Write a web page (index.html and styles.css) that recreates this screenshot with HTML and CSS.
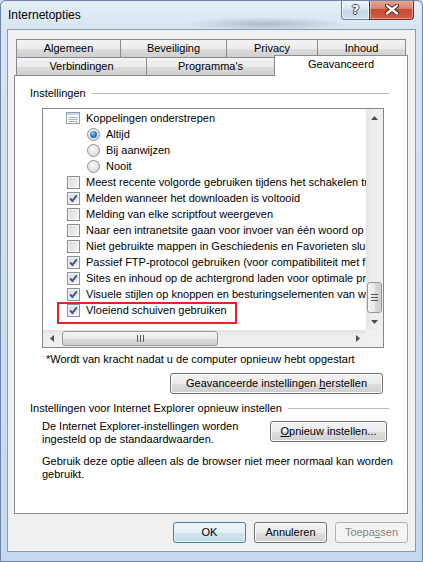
FILE: index.html
```html
<!DOCTYPE html>
<html lang="nl">
<head>
    <meta charset="UTF-8">
    <title>Internetopties</title>
    <link rel="stylesheet" href="styles.css">
</head>
<body>

<div class="window">
    <div class="titlebar">
        <span class="title">Internetopties</span>
        <div class="caption-buttons">
            <div class="cap-btn help"><span>?</span></div>
            <div class="cap-btn close">
                <svg width="14" height="11" viewBox="0 0 14 11">
                    <path d="M2 1.5 L12 9.5 M12 1.5 L2 9.5" stroke="#4a1a12" stroke-width="4.2" stroke-linecap="round"/>
                    <path d="M2 1.5 L12 9.5 M12 1.5 L2 9.5" stroke="#fff" stroke-width="2.4" stroke-linecap="round"/>
                </svg>
            </div>
        </div>
    </div>

    <div class="client">
        <div class="tabs">
            <div class="tab-row">
                <div class="tab w-algemeen">Algemeen</div>
                <div class="tab w-beveiliging">Beveiliging</div>
                <div class="tab w-privacy">Privacy</div>
                <div class="tab w-inhoud">Inhoud</div>
            </div>
            <div class="tab-row">
                <div class="tab w-verbindingen">Verbindingen</div>
                <div class="tab w-programmas">Programma's</div>
                <div class="tab tab-selected w-geavanceerd">Geavanceerd</div>
            </div>
        </div>

        <div class="panel">
            <div class="group-head">Instellingen</div>

            <div class="listbox">
                <div class="list-view">
                    <div class="item item-icon">
                        <svg class="opt-icon" width="14" height="12" viewBox="0 0 14 12">
                            <rect x="0.5" y="0.5" width="13" height="11" fill="#fff" stroke="#8d9db2"/>
                            <rect x="1" y="1" width="12" height="2" fill="#c9d6e6"/>
                            <path d="M2.5 5.5 H11.5 M2.5 7.5 H11.5 M2.5 9.5 H11.5" stroke="#a3adba"/>
                        </svg>
                        Koppelingen onderstrepen
                    </div>
                    <div class="item item-sub"><span class="radio"><span class="dot"></span></span>Altijd</div>
                    <div class="item item-sub"><span class="radio"></span>Bij aanwijzen</div>
                    <div class="item item-sub"><span class="radio"></span>Nooit</div>
                    <div class="item"><span class="cb"></span>Meest recente volgorde gebruiken tijdens het schakelen tussen tabbladen met Ctrl+Tab</div>
                    <div class="item"><span class="cb"><svg viewBox="0 0 13 13"><path d="M3.2 6.4 L5.4 9 L9.8 3.4"/></svg></span>Melden wanneer het downloaden is voltooid</div>
                    <div class="item"><span class="cb"></span>Melding van elke scriptfout weergeven</div>
                    <div class="item"><span class="cb"></span>Naar een intranetsite gaan voor invoer van één woord op de adresbalk</div>
                    <div class="item"><span class="cb"></span>Niet gebruikte mappen in Geschiedenis en Favorieten sluiten*</div>
                    <div class="item"><span class="cb"><svg viewBox="0 0 13 13"><path d="M3.2 6.4 L5.4 9 L9.8 3.4"/></svg></span>Passief FTP-protocol gebruiken (voor compatibiliteit met firewalls en DSL-modems)</div>
                    <div class="item"><span class="cb"><svg viewBox="0 0 13 13"><path d="M3.2 6.4 L5.4 9 L9.8 3.4"/></svg></span>Sites en inhoud op de achtergrond laden voor optimale prestaties*</div>
                    <div class="item"><span class="cb"><svg viewBox="0 0 13 13"><path d="M3.2 6.4 L5.4 9 L9.8 3.4"/></svg></span>Visuele stijlen op knoppen en besturingselementen van webpagina's inschakelen</div>
                    <div class="item"><span class="cb"><svg viewBox="0 0 13 13"><path d="M3.2 6.4 L5.4 9 L9.8 3.4"/></svg></span>Vloeiend schuiven gebruiken</div>
                </div>

                <div class="vscroll">
                    <div class="sb-btn"><svg width="7" height="4" viewBox="0 0 7 4"><path d="M0 4 L3.5 0 L7 4 Z"/></svg></div>
                    <div class="sb-space"></div>
                    <div class="thumb vthumb">
                        <svg width="7" height="7" viewBox="0 0 7 7"><path d="M0 0.5 H7 M0 3.5 H7 M0 6.5 H7" stroke="#5a5a5a"/></svg>
                    </div>
                    <div class="sb-btn"><svg width="7" height="4" viewBox="0 0 7 4"><path d="M0 0 L3.5 4 L7 0 Z"/></svg></div>
                </div>

                <div class="hscroll">
                    <div class="sb-btn"><svg width="4" height="7" viewBox="0 0 4 7"><path d="M4 0 L0 3.5 L4 7 Z"/></svg></div>
                    <div class="thumb hthumb">
                        <svg width="7" height="7" viewBox="0 0 7 7"><path d="M0.5 0 V7 M3.5 0 V7 M6.5 0 V7" stroke="#5a5a5a"/></svg>
                    </div>
                    <div class="sb-space"></div>
                    <div class="sb-btn"><svg width="4" height="7" viewBox="0 0 4 7"><path d="M0 0 L4 3.5 L0 7 Z"/></svg></div>
                </div>
                <div class="sb-corner"></div>

                <div class="highlight"></div>
            </div>

            <div class="note">*Wordt van kracht nadat u de computer opnieuw hebt opgestart</div>

            <div class="btn btn-reset">Geavanceerde instellingen <u>h</u>erstellen</div>

            <div class="group-head group-reset">Instellingen voor Internet Explorer opnieuw instellen</div>

            <div class="reset-row">
                <div class="reset-text">De Internet Explorer-instellingen worden<br>ingesteld op de standaardwaarden.</div>
                <div class="btn btn-open"><u>O</u>pnieuw instellen...</div>
            </div>

            <div class="usage">Gebruik deze optie alleen als de browser niet meer normaal kan worden<br>gebruikt.</div>
        </div>

        <div class="actions">
            <div class="btn btn-default">OK</div>
            <div class="btn">Annuleren</div>
            <div class="btn btn-disabled">Toepa<u>s</u>sen</div>
        </div>
    </div>
</div>

</body>
</html>
```

FILE: styles.css
```css
body {
    margin: 0;
    font-family: "Liberation Sans", Arial, sans-serif;
    font-size: 11px;
    color: #000;
    background: #c8daee;
}

.window {
    width: 423px;
    height: 562px;
    box-sizing: border-box;
    border: 1px solid #6f85a3;
    border-radius: 6px 6px 0 0;
    display: flex;
    flex-direction: column;
    background:
        radial-gradient(ellipse 80px 7px at 265px 23px, rgba(95, 105, 125, 0.35), transparent),
        linear-gradient(to bottom, #e6eef8 0, #d6e4f3 28px, #c4d8ee 100%);
    overflow: hidden;
}

/* title bar */
.titlebar {
    height: 28px;
    display: flex;
    justify-content: space-between;
    align-items: flex-start;
}
.title {
    margin: 7px 0 0 7px;
    font-size: 12px;
    line-height: 14px;
    color: #000;
}
.caption-buttons {
    display: flex;
    margin-right: 8px;
    margin-top: -1px;
}
.cap-btn {
    height: 20px;
    box-sizing: border-box;
    display: flex;
    align-items: center;
    justify-content: center;
    border: 1px solid #6d7f98;
    border-top: none;
}
.help {
    width: 28px;
    border-right: none;
    border-radius: 0 0 0 4px;
    background: linear-gradient(to bottom, #eef4fa 0, #dbe6f2 50%, #c6d5e7 51%, #cfdff0 100%);
    box-shadow: inset 0 0 0 1px rgba(255, 255, 255, 0.6);
}
.help span {
    font-family: "DejaVu Sans", sans-serif;
    font-weight: bold;
    font-size: 13px;
    color: #fff;
    text-shadow: 1px 0 #3c4a5c, -1px 0 #3c4a5c, 0 1px #3c4a5c, 0 -1px #3c4a5c;
}
.close {
    width: 45px;
    border-color: #6b2c22;
    border-radius: 0 0 4px 0;
    background: linear-gradient(to bottom, #e9a999 0, #d8826d 45%, #c54a32 50%, #d25f45 100%);
    box-shadow: inset 0 0 0 1px rgba(255, 220, 210, 0.5);
}

/* client area */
.client {
    margin: 0 6px;
    height: 523px;
    box-sizing: border-box;
    border: 1px solid #8a9bb2;
    background: #f0f0f0;
    padding: 9px 7px 0 6px;
}

/* tabs */
.tabs {
    margin-left: 2px;
}
.tab-row {
    display: flex;
    height: 18px;
}
.tab {
    height: 18px;
    box-sizing: border-box;
    border: 1px solid #898c95;
    border-bottom: none;
    margin-left: -1px;
    background: linear-gradient(to bottom, #f3f3f3 0, #ebebeb 50%, #dddddd 51%, #cfcfcf 100%);
    text-align: center;
    line-height: 16px;
    white-space: nowrap;
}
.tab:first-child {
    margin-left: 0;
}
.tab-selected {
    position: relative;
    z-index: 1;
    height: 21px;
    margin-top: -2px;
    background: #fff;
    line-height: 16px;
}
.w-algemeen { width: 105px; }
.w-beveiliging { width: 107px; }
.w-privacy { width: 92px; }
.w-inhoud { width: 89px; }
.w-verbindingen { width: 131px; }
.w-programmas { width: 129px; }
.w-geavanceerd { width: 134px; }

/* tab page */
.panel {
    height: 439px;
    box-sizing: border-box;
    border: 1px solid #898c95;
    background: #fff;
    display: flex;
    flex-direction: column;
}
.group-head {
    display: flex;
    align-items: center;
    height: 15px;
    line-height: 15px;
    margin: 10px 18px 0 15px;
    white-space: nowrap;
}
.group-head::after {
    content: "";
    flex: 1;
    border-top: 1px solid #b9b9b9;
    margin-left: 6px;
}
.group-reset {
    margin-top: 7px;
}

/* settings list */
.listbox {
    position: relative;
    margin: 7px 0 0 27px;
    width: 342px;
    height: 240px;
    box-sizing: border-box;
    border: 1px solid #828790;
    display: grid;
    grid-template-columns: 1fr 17px;
    grid-template-rows: 1fr 17px;
}
.list-view {
    overflow: hidden;
    padding-top: 1px;
}
.item {
    height: 16px;
    display: flex;
    align-items: center;
    gap: 6px;
    padding-left: 24px;
    white-space: nowrap;
}
.item-icon {
    padding-left: 23px;
}
.item-sub {
    padding-left: 44px;
}
.opt-icon {
    flex: none;
}
.cb,
.radio {
    flex: none;
    width: 13px;
    height: 13px;
    box-sizing: border-box;
    border: 1px solid #8e8f8f;
    display: flex;
    align-items: center;
    justify-content: center;
}
.cb {
    background: linear-gradient(135deg, #d4d4d4 0, #e9e9e9 55%, #f7f7f7 100%);
    box-shadow: inset 0 0 0 1px #f4f4f4;
}
.cb svg {
    width: 13px;
    height: 13px;
    flex: none;
}
.cb path {
    fill: none;
    stroke: #3a5089;
    stroke-width: 1.9;
}
.radio {
    border-radius: 50%;
    background: radial-gradient(circle at 40% 35%, #fafafa 0, #e2e2e2 60%, #cfcfcf 100%);
}
.radio .dot {
    width: 7px;
    height: 7px;
    border-radius: 50%;
    background: radial-gradient(circle at 40% 35%, #9fd0f5 0, #2e7fc4 45%, #174d86 100%);
}

/* scrollbars */
.vscroll {
    display: flex;
    flex-direction: column;
    background: linear-gradient(to right, #e2e2e2 0, #ededed 30%, #f0f0f0 100%);
}
.hscroll {
    display: flex;
    align-items: center;
    background: linear-gradient(to bottom, #e2e2e2 0, #ededed 30%, #f0f0f0 100%);
}
.sb-btn {
    flex: none;
    width: 17px;
    height: 17px;
    display: flex;
    align-items: center;
    justify-content: center;
}
.sb-btn path {
    fill: #4d4d4d;
}
.sb-space {
    flex: 1;
}
.thumb {
    flex: none;
    box-sizing: border-box;
    border: 1px solid #979797;
    border-radius: 3px;
    display: flex;
    align-items: center;
    justify-content: center;
}
.vthumb {
    height: 31px;
    margin: 0 1px;
    background: linear-gradient(to right, #f4f4f4 0, #e9e9e9 50%, #dadada 51%, #d0d0d0 100%);
}
.hthumb {
    width: 156px;
    height: 15px;
    margin-left: 2px;
    background: linear-gradient(to bottom, #f4f4f4 0, #e9e9e9 50%, #dadada 51%, #d0d0d0 100%);
}
.sb-corner {
    background: #f0f0f0;
}
.highlight {
    position: absolute;
    left: 14px;
    top: 193px;
    width: 180px;
    height: 22px;
    box-sizing: border-box;
    border: 2px solid #e5212a;
}

.note {
    margin: 4px 0 0 31px;
    line-height: 15px;
}

/* buttons */
.btn {
    box-sizing: border-box;
    height: 21px;
    border: 1px solid #707070;
    border-radius: 3px;
    background: linear-gradient(to bottom, #f2f2f2 0, #ebebeb 50%, #dddddd 51%, #cfcfcf 100%);
    box-shadow: inset 0 0 0 1px #fcfcfc;
    text-align: center;
    line-height: 19px;
    white-space: nowrap;
}
.btn-reset {
    align-self: flex-end;
    width: 213px;
    margin: 6px 24px 0 0;
}
.reset-row {
    display: flex;
    justify-content: space-between;
    margin: 4px 20px 0 27px;
}
.reset-text {
    line-height: 13px;
}
.btn-open {
    width: 117px;
    margin-top: 1px;
}
.usage {
    margin: 9px 0 0 27px;
    line-height: 13px;
    white-space: nowrap;
}

.actions {
    display: flex;
    justify-content: flex-end;
    gap: 8px;
    margin-top: 8px;
}
.actions .btn {
    width: 73px;
}
.btn-default {
    border-color: #3c7fb1;
    background: linear-gradient(to bottom, #f1f7fb 0, #e3eef6 50%, #d0e2ef 51%, #c4dbeb 100%);
    box-shadow: inset 0 0 0 1px #e9f5fc;
}
.btn-disabled {
    border-color: #adb2b5;
    background: #f4f4f4;
    box-shadow: none;
    color: #838383;
}
```
